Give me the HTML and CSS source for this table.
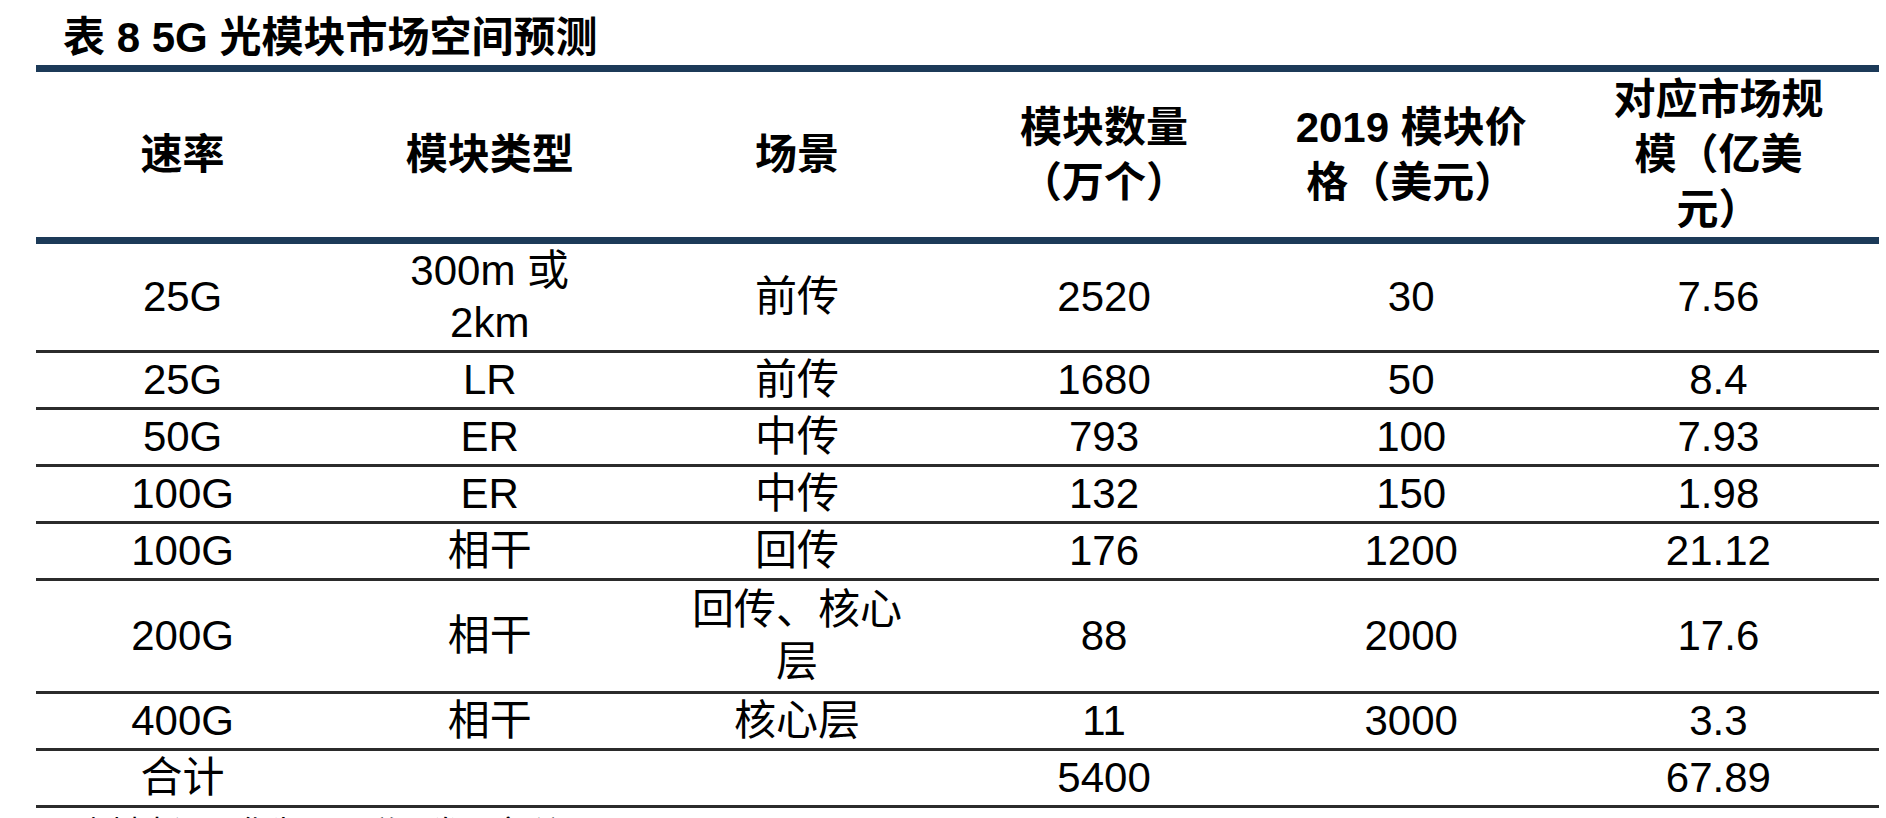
FILE: index.html
```html
<!DOCTYPE html>
<html lang="zh-CN">
<head>
<meta charset="utf-8">
<title>表 8 5G 光模块市场空间预测</title>
<link rel="stylesheet" href="styles.css">
</head>
<body>
<div class="page">
  <div class="title">表 8 5G 光模块市场空间预测</div>
  <table class="tbl">
    <thead>
      <tr>
        <th>速率</th>
        <th>模块类型</th>
        <th>场景</th>
        <th>模块数量<br>（万个）</th>
        <th>2019 模块价<br>格（美元）</th>
        <th>对应市场规<br>模（亿美<br>元）</th>
      </tr>
    </thead>
    <tbody>
      <tr><td>25G</td><td>300m 或<br>2km</td><td>前传</td><td>2520</td><td>30</td><td>7.56</td></tr>
      <tr><td>25G</td><td>LR</td><td>前传</td><td>1680</td><td>50</td><td>8.4</td></tr>
      <tr><td>50G</td><td>ER</td><td>中传</td><td>793</td><td>100</td><td>7.93</td></tr>
      <tr><td>100G</td><td>ER</td><td>中传</td><td>132</td><td>150</td><td>1.98</td></tr>
      <tr><td>100G</td><td>相干</td><td>回传</td><td>176</td><td>1200</td><td>21.12</td></tr>
      <tr class="tall"><td>200G</td><td>相干</td><td>回传、核心<br>层</td><td>88</td><td>2000</td><td>17.6</td></tr>
      <tr><td>400G</td><td>相干</td><td>核心层</td><td>11</td><td>3000</td><td>3.3</td></tr>
      <tr><td>合计</td><td></td><td></td><td>5400</td><td></td><td>67.89</td></tr>
    </tbody>
  </table>
  <div class="source">资料来源：华为，万联证券研究所</div>
</div>
</body>
</html>
```

FILE: styles.css
```css
html, body {
  margin: 0;
  padding: 0;
  background: #ffffff;
}

body {
  font-family: "Liberation Sans", "Noto Sans CJK SC", sans-serif;
  color: #000000;
  overflow: hidden;
}

.page {
  padding-left: 36px;
}

.title {
  height: 65px;
  box-sizing: border-box;
  padding: 17px 0 0 27px;
  font-size: 42px;
  line-height: 42px;
  font-weight: 700;
  white-space: nowrap;
}

.tbl {
  width: 1843px;
  table-layout: fixed;
  border-collapse: separate;
  border-spacing: 0;
  font-size: 42px;
}

.tbl th {
  font-weight: 700;
  line-height: 55px;
  padding: 0 40px 0 26px;
  border-top: 7px solid #1c3a58;
  border-bottom: 7px solid #1c3a58;
  text-align: center;
  vertical-align: middle;
  white-space: nowrap;
}

.tbl td {
  font-weight: 400;
  line-height: 52px;
  padding: 1px 40px 1px 26px;
  border-bottom: 3px solid #2b2b2b;
  text-align: center;
  vertical-align: middle;
  white-space: nowrap;
}

.tbl tr.tall td {
  padding-top: 3px;
  padding-bottom: 3px;
}

.source {
  margin-top: 9px;
  padding-left: 41px;
  font-size: 32px;
  line-height: 32px;
  white-space: nowrap;
}
```
